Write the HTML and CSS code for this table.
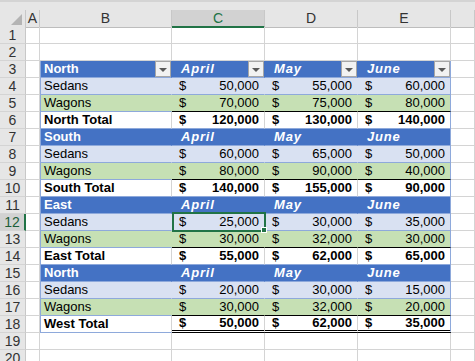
FILE: index.html
```html
<!DOCTYPE html>
<html lang="en">
<head>
  <meta charset="UTF-8" />
  <title>Regional Sales</title>
  <link rel="stylesheet" href="styles.css">
</head>
<body>

<div class="sheet">
  <div class="topbar"></div>

  <div class="row colheads">
    <div class="corner"><svg width="11" height="11" viewBox="0 0 11 11"><polygon points="11,0 11,11 0,11" fill="#b4b4b4"/></svg></div>
    <div class="ch">A</div>
    <div class="ch">B</div>
    <div class="ch sel">C</div>
    <div class="ch">D</div>
    <div class="ch">E</div>
    <div class="ch"></div>
  </div>

  <div class="row"><div class="rh">1</div><div class="c"></div><div class="c"></div><div class="c"></div><div class="c"></div><div class="c"></div><div class="c"></div></div>
  <div class="row"><div class="rh">2</div><div class="c"></div><div class="c"></div><div class="c"></div><div class="c"></div><div class="c"></div><div class="c"></div></div>

  <!-- North -->
  <div class="row"><div class="rh">3</div><div class="c"></div>
    <div class="c hd first">North<span class="dd"></span></div>
    <div class="c hd month">April<span class="dd"></span></div>
    <div class="c hd month">May<span class="dd"></span></div>
    <div class="c hd month last">June<span class="dd"></span></div>
    <div class="c"></div></div>
  <div class="row"><div class="rh">4</div><div class="c"></div>
    <div class="c sed first">Sedans</div>
    <div class="c sed num"><span>$</span><span>50,000</span></div>
    <div class="c sed num"><span>$</span><span>55,000</span></div>
    <div class="c sed num last"><span>$</span><span>60,000</span></div>
    <div class="c"></div></div>
  <div class="row"><div class="rh">5</div><div class="c"></div>
    <div class="c wag first">Wagons</div>
    <div class="c wag num rule"><span>$</span><span>70,000</span></div>
    <div class="c wag num rule"><span>$</span><span>75,000</span></div>
    <div class="c wag num rule last"><span>$</span><span>80,000</span></div>
    <div class="c"></div></div>
  <div class="row"><div class="rh">6</div><div class="c"></div>
    <div class="c tot first">North Total</div>
    <div class="c tot num"><span>$</span><span>120,000</span></div>
    <div class="c tot num"><span>$</span><span>130,000</span></div>
    <div class="c tot num last"><span>$</span><span>140,000</span></div>
    <div class="c"></div></div>

  <!-- South -->
  <div class="row"><div class="rh">7</div><div class="c"></div>
    <div class="c hd first">South</div>
    <div class="c hd month">April</div>
    <div class="c hd month">May</div>
    <div class="c hd month last">June</div>
    <div class="c"></div></div>
  <div class="row"><div class="rh">8</div><div class="c"></div>
    <div class="c sed first">Sedans</div>
    <div class="c sed num"><span>$</span><span>60,000</span></div>
    <div class="c sed num"><span>$</span><span>65,000</span></div>
    <div class="c sed num last"><span>$</span><span>50,000</span></div>
    <div class="c"></div></div>
  <div class="row"><div class="rh">9</div><div class="c"></div>
    <div class="c wag first">Wagons</div>
    <div class="c wag num rule"><span>$</span><span>80,000</span></div>
    <div class="c wag num rule"><span>$</span><span>90,000</span></div>
    <div class="c wag num rule last"><span>$</span><span>40,000</span></div>
    <div class="c"></div></div>
  <div class="row"><div class="rh">10</div><div class="c"></div>
    <div class="c tot first">South Total</div>
    <div class="c tot num"><span>$</span><span>140,000</span></div>
    <div class="c tot num"><span>$</span><span>155,000</span></div>
    <div class="c tot num last"><span>$</span><span>90,000</span></div>
    <div class="c"></div></div>

  <!-- East -->
  <div class="row"><div class="rh">11</div><div class="c"></div>
    <div class="c hd first">East</div>
    <div class="c hd month">April</div>
    <div class="c hd month">May</div>
    <div class="c hd month last">June</div>
    <div class="c"></div></div>
  <div class="row"><div class="rh sel">12</div><div class="c"></div>
    <div class="c sed first">Sedans</div>
    <div class="c sed num active"><span>$</span><span>25,000</span><i class="handle"></i></div>
    <div class="c sed num"><span>$</span><span>30,000</span></div>
    <div class="c sed num last"><span>$</span><span>35,000</span></div>
    <div class="c"></div></div>
  <div class="row"><div class="rh">13</div><div class="c"></div>
    <div class="c wag first">Wagons</div>
    <div class="c wag num rule"><span>$</span><span>30,000</span></div>
    <div class="c wag num rule"><span>$</span><span>32,000</span></div>
    <div class="c wag num rule last"><span>$</span><span>30,000</span></div>
    <div class="c"></div></div>
  <div class="row"><div class="rh">14</div><div class="c"></div>
    <div class="c tot first">East Total</div>
    <div class="c tot num"><span>$</span><span>55,000</span></div>
    <div class="c tot num"><span>$</span><span>62,000</span></div>
    <div class="c tot num last"><span>$</span><span>65,000</span></div>
    <div class="c"></div></div>

  <!-- West -->
  <div class="row"><div class="rh">15</div><div class="c"></div>
    <div class="c hd first">North</div>
    <div class="c hd month">April</div>
    <div class="c hd month">May</div>
    <div class="c hd month last">June</div>
    <div class="c"></div></div>
  <div class="row"><div class="rh">16</div><div class="c"></div>
    <div class="c sed first">Sedans</div>
    <div class="c sed num"><span>$</span><span>20,000</span></div>
    <div class="c sed num"><span>$</span><span>30,000</span></div>
    <div class="c sed num last"><span>$</span><span>15,000</span></div>
    <div class="c"></div></div>
  <div class="row"><div class="rh">17</div><div class="c"></div>
    <div class="c wag first">Wagons</div>
    <div class="c wag num rule"><span>$</span><span>30,000</span></div>
    <div class="c wag num rule"><span>$</span><span>32,000</span></div>
    <div class="c wag num rule last"><span>$</span><span>20,000</span></div>
    <div class="c"></div></div>
  <div class="row"><div class="rh">18</div><div class="c"></div>
    <div class="c tot first">West Total</div>
    <div class="c tot num dbl"><span>$</span><span>50,000</span></div>
    <div class="c tot num dbl"><span>$</span><span>62,000</span></div>
    <div class="c tot num dbl last"><span>$</span><span>35,000</span></div>
    <div class="c"></div></div>

  <div class="row"><div class="rh">19</div><div class="c"></div><div class="c"></div><div class="c"></div><div class="c"></div><div class="c"></div><div class="c"></div></div>
  <div class="row"><div class="rh">20</div><div class="c"></div><div class="c"></div><div class="c"></div><div class="c"></div><div class="c"></div><div class="c"></div></div>
</div>

</body>
</html>
```

FILE: styles.css
```css
* {
  margin: 0; padding: 0; box-sizing: border-box;
}
body {
  background: #fff;
  font-family: 'Liberation Sans', Arial, sans-serif;
  font-size: 13px;
  color: #000;
  overflow: hidden;
}
.sheet {
  width: 475px;
}
.topbar {
  height: 10px;
  background: #e6e6e6;
  border-top: 2px solid #d4d4d4;
}
.row {
  display: grid;
  grid-template-columns: 26px 14px 132px 93px 93px 93px 24px;
  height: 17px;
}
.row > div {
  line-height: 16px;
  white-space: nowrap;
}

/* column and row headings */
.colheads > div {
  background: #e6e6e6;
  border-right: 1px solid #c8c8c8;
  border-bottom: 1px solid #bdbdbd;
  text-align: center;
  color: #333;
  font-size: 14px;
}
.corner {
  display: flex;
  align-items: flex-end;
  justify-content: flex-end;
  padding: 0 3px 2px 0;
}
.colheads .sel {
  background: #d2d2d2;
  border-bottom: 2px solid #217346;
  color: #217346;
}
.rh {
  background: #e6e6e6;
  border-right: 1px solid #c8c8c8;
  border-bottom: 1px solid #d4d4d4;
  text-align: center;
  color: #333;
  font-size: 14px;
}
.rh.sel {
  background: #d2d2d2;
  border-right: 2px solid #217346;
  color: #1d5e3a;
}

/* plain cells */
.c {
  border-right: 1px solid #d4d4d4;
  border-bottom: 1px solid #d4d4d4;
  padding-left: 4px;
  position: relative;
}

/* table styles */
.hd {
  background: #4472c4;
  border-right-color: #4472c4;
  border-bottom-color: #8ea9db;
  color: #fff;
  font-weight: bold;
}
.hd.month {
  font-style: italic;
  padding-left: 9px;
  letter-spacing: 0.8px;
}
.sed {
  background: #d9e1f2;
  border-right-color: #d9e1f2;
  border-bottom-color: #8ea9db;
}
.wag {
  background: #c6e0b4;
  border-right-color: #c6e0b4;
  border-bottom-color: #8ea9db;
}
.tot {
  font-weight: bold;
  border-bottom-color: #8ea9db;
}
.first {
  border-left: 1px solid #8ea9db;
  padding-left: 3px;
}
.last {
  border-right-color: #8ea9db;
}
.rule {
  border-bottom-color: #000;
}
.dbl {
  border-bottom: 3px double #000;
  line-height: 14px !important;
}
.num {
  display: flex;
  justify-content: space-between;
  padding: 0 5px 0 7px;
}

/* filter buttons */
.dd {
  position: absolute;
  right: 0;
  top: 0;
  width: 16px;
  height: 16px;
  background: #f2f2f2;
  border: 1px solid #a6a6a6;
}
.dd::after {
  content: "";
  position: absolute;
  left: 3px;
  top: 6px;
  border-left: 4px solid transparent;
  border-right: 4px solid transparent;
  border-top: 4px solid #595959;
}

/* active cell */
.active {
  z-index: 3;
}
.active::before {
  content: "";
  position: absolute;
  box-sizing: border-box;
  left: 0;
  top: -2px;
  width: 94px;
  height: 20px;
  border: 2px solid #217346;
}
.handle {
  position: absolute;
  right: -3px;
  bottom: -3px;
  width: 6px;
  height: 6px;
  background: #217346;
  border: 1px solid #fff;
}
```
